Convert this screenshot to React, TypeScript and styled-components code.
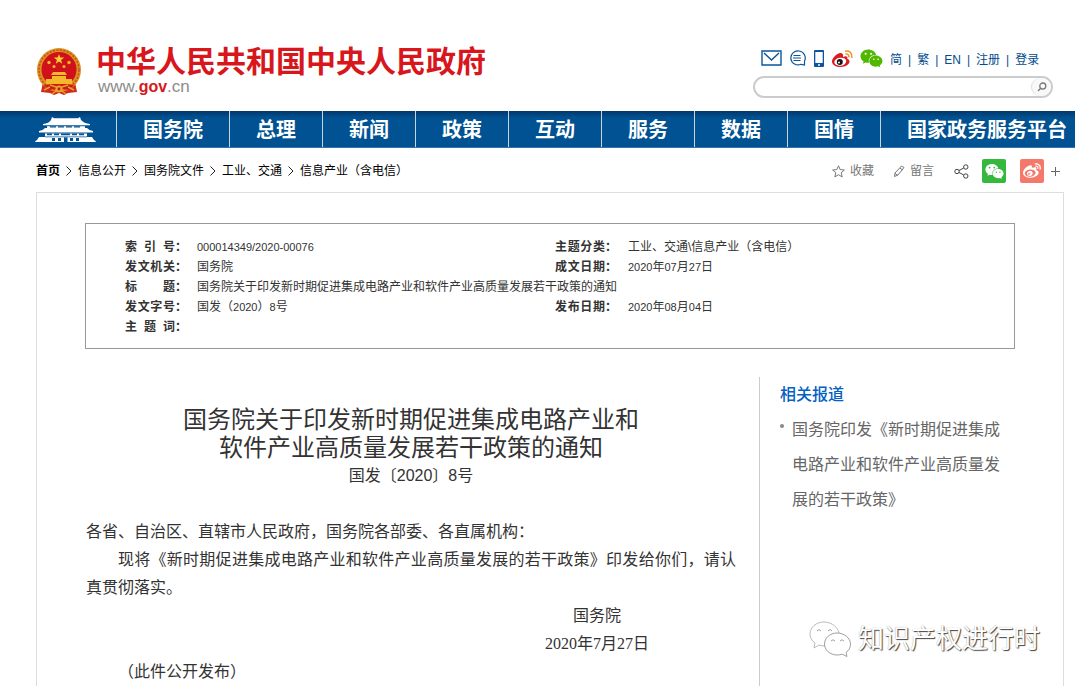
import React from "react";
import styled, { createGlobalStyle } from "styled-components";
import { FaWeibo, FaWeixin } from "react-icons/fa";

const GlobalStyle = createGlobalStyle`
  * { box-sizing: border-box; }
  html, body, #root { height: 100%; }
  body {
    margin: 0;
    overflow: hidden;
    background: #fff;
    color: #333;
    font-family: "Liberation Sans", "Noto Sans CJK SC", sans-serif;
    font-size: 12px;
  }
  a { color: inherit; text-decoration: none; }
  button { border: 0; background: none; padding: 0; font: inherit; color: inherit; cursor: pointer; }
  ul, ol, h1, h2, p, dl, dd { margin: 0; padding: 0; list-style: none; }
  svg { display: block; flex: none; }
`;

const Page = styled.div`
  position: relative;
  display: flex;
  flex-direction: column;
  height: 100%;
  overflow: hidden;
`;

const Header = styled.header`
  display: flex;
  flex: none;
  justify-content: space-between;
  align-items: flex-start;
  height: 111px;
  padding: 44px 22px 0 36px;
`;

const Brand = styled.a`
  display: flex;
  gap: 14px;
  padding-top: 2px;
`;

const BrandName = styled.span`
  display: block;
  color: #d7171b;
  font-size: 30px;
  font-weight: 700;
  line-height: 32px;
  white-space: nowrap;
`;

const BrandUrl = styled.span`
  display: block;
  padding-left: 2px;
  color: #8c8c8c;
  font-size: 17px;
  line-height: 18px;

  b {
    color: #d7171b;
    font-size: 16px;
  }
`;

const HeaderTools = styled.div`
  width: 300px;
`;

const QuickLinks = styled.div`
  display: flex;
  align-items: center;
  height: 28px;
  padding-left: 8px;
  color: #004b8d;
  line-height: 20px;
  white-space: nowrap;
`;

const QuickIcons = styled.div`
  display: flex;
  align-items: center;
  gap: 7px;
  margin-right: 7px;
`;

const LangList = styled.ul`
  display: flex;
  padding-top: 3px;

  li + li::before {
    content: "|";
    margin: 0 6px;
  }
`;

const SearchForm = styled.form`
  display: flex;
  align-items: center;
  height: 22px;
  margin-top: 4px;
  border: 2px solid #ccc;
  border-radius: 11px;
`;

const SearchInput = styled.input`
  flex: 1;
  min-width: 0;
  height: 18px;
  padding: 0 10px;
  border: 0;
  outline: 0;
  background: transparent;
`;

const SearchButton = styled.button`
  display: flex;
  align-items: center;
  justify-content: center;
  width: 20px;
  height: 18px;
  border-left: 1px solid #ddd;
  border-radius: 9px;
  background: #f8f8f8;
`;

const Nav = styled.nav`
  display: flex;
  flex: none;
  height: 37px;
  padding-left: 35px;
  overflow: hidden;
  border-bottom: 1px solid #3b73a9;
  background: linear-gradient(#00386a, #005293 7px, #005293);
`;

const NavItem = styled.a<{ $home?: boolean }>`
  flex: none;
  padding: ${(p) => (p.$home ? "6px 20px 0 0" : "0 26px")};
  border-right: 1px solid #c9d3dc;
  color: #fff;
  font-size: 20px;
  font-weight: 700;
  line-height: 38px;
  white-space: nowrap;

  &:last-child { border-right: 0; }
`;

const SubBar = styled.div`
  display: flex;
  flex: none;
  align-items: center;
  justify-content: space-between;
  height: 44px;
  padding: 2px 14px 0 36px;
`;

const Crumbs = styled.ol`
  display: flex;
  align-items: center;
  gap: 6px;
  color: #000;
  line-height: 20px;
  white-space: nowrap;

  li { display: flex; align-items: center; gap: 6px; }
  li:first-child { font-weight: 700; }
`;

const ShareBar = styled.div`
  display: flex;
  align-items: center;
  color: #777;
  line-height: 20px;
`;

const ShareButton = styled.button<{ $gap: number }>`
  display: flex;
  align-items: center;
  gap: 5px;
  margin-right: ${(p) => p.$gap}px;
  white-space: nowrap;
`;

const ShareTile = styled.button<{ $color: string; $gap: number }>`
  display: flex;
  align-items: center;
  justify-content: center;
  width: 24px;
  height: 24px;
  margin-right: ${(p) => p.$gap}px;
  border-radius: 2px;
  background: ${(p) => p.$color};
  color: #fff;
`;

const Sheet = styled.main`
  flex: 1;
  margin: 0 11px 0 36px;
  padding: 30px 48px 0;
  border: 1px solid #ddd;
  border-bottom: 0;
`;

const MetaBox = styled.section`
  padding: 13px 38px 11px 39px;
  border: 1px solid #999;
`;

const MetaTable = styled.table`
  width: 100%;
  border-collapse: collapse;
  table-layout: fixed;
  line-height: 20px;
  white-space: nowrap;

  th, td { padding: 0; text-align: left; }
`;

const MetaLabel = styled.span`
  display: inline-block;
  width: 50px;
  text-align: justify;
  text-align-last: justify;
  vertical-align: top;
`;

const Columns = styled.div`
  display: flex;
  height: 100%;
  padding-top: 28px;
`;

const Article = styled.article`
  flex: 1;
  padding: 29px 23px 0 1px;
  font-size: 16px;
  line-height: 28px;
`;

const ArticleTitle = styled.h1`
  font-size: 24px;
  font-weight: 400;
  line-height: 28px;
  text-align: center;
`;

const DocNumber = styled.p`
  margin-bottom: 28px;
  text-align: center;
`;

const Paragraph = styled.p<{ $indent?: boolean }>`
  text-align: justify;
  text-indent: ${(p) => (p.$indent ? "2em" : "0")};
`;

const Signature = styled.div`
  width: 104px;
  margin: 0 87px 0 auto;
  font-family: "Liberation Serif", "Noto Sans CJK SC", serif;
  text-align: center;
  white-space: nowrap;
`;

const Digits = styled.span`
  font-size: 11px;
`;

const Aside = styled.aside`
  width: 256px;
  padding-left: 20px;
  border-left: 1px solid #ccc;
`;

const AsideTitle = styled.h2`
  color: #0560c4;
  font-size: 16px;
  font-weight: 500;
  line-height: 35px;
`;

const AsideItem = styled.li`
  display: flex;
  gap: 8px;
  width: 222px;
  color: #666;
  font-size: 16px;
  line-height: 35px;

  &::before {
    content: "";
    flex: none;
    width: 4px;
    height: 4px;
    margin-top: 12px;
    border-radius: 2px;
    background: #888;
  }
`;

const Watermark = styled.div`
  position: absolute;
  right: 35px;
  bottom: 28px;
  display: flex;
  align-items: center;
  gap: 7px;
  color: #fff;
  font-size: 26px;
  line-height: 38px;
  text-shadow: 1px 1px 1px #444, 0 0 1px #999;
`;

const Emblem = () => (
  <svg width="46" height="50" viewBox="0 0 46 50" aria-label="国徽">
    <path d="M7 36L5 46l9 1 4 2 5-2 5 2 4-2 9-1-2-10z" fill="#cf2a1c" />
    <circle cx="23" cy="24" r="22" fill="#dd8f20" />
    <circle cx="23" cy="24" r="20" fill="none" stroke="#c2511c" strokeWidth="1.5" strokeDasharray="2 1.5" />
    <circle cx="23" cy="23.500" r="17.500" fill="#d0101a" />
    <path d="M23 8l1.300 3.600h3.900l-3.100 2.400 1.100 3.700-3.200-2.200-3.200 2.200 1.100-3.700-3.100-2.400h3.900z" fill="#fad02c" />
    <g fill="#f4b929">
      <circle cx="13" cy="16.500" r="1.700" /><circle cx="33" cy="16.500" r="1.700" />
      <circle cx="18" cy="20.500" r="1.500" /><circle cx="28" cy="20.500" r="1.500" />
      <path d="M17 26h12l2 3H15zM16 30h14v3H16zM10 33h26v5H10z" />
    </g>
    <path d="M8 39q15-2 30 0l-5 5q-10-3-20 0z" fill="#cf1a1c" />
    <path d="M14 39l9 3 9-3M8 44l6-3M38 44l-6-3M16 48l7-5 7 5" fill="none" stroke="#e9a127" strokeWidth="1.500" />
    <circle cx="23" cy="43" r="3.500" fill="#e9a127" /><circle cx="23" cy="43" r="1.400" fill="#c5161d" />
  </svg>
);

const Gate = () => (
  <svg width="61" height="26" viewBox="0 0 61 26" aria-label="首页">
    <g fill="#fff">
      <path d="M17 0l2 1.200h24L45 0l1 3q3 3.500 9 4v1.300H8V7q6-.5 8-4z" />
      <path d="M12 9.300h38V12H12z" />
      <path d="M10 11h42q2 2.500 6 3v1.400H4V14q4-.5 6-3z" />
      <path d="M10 16.400h42V25H10z" />
      <path d="M4 20h8v5H0q0-1 2-2zM49 20h8l2 3q2 1 2 2H49z" />
    </g>
    <g fill="#005293">
      <path d="M15 9.300h6v1.200h-6zM23 9.300h6v1.200h-6zM31 9.300h6v1.200h-6zM39 9.300h6v1.200h-6z" />
      <path d="M12 16.400h5v1.800h-5zM19 16.400h5v1.800h-5zM26 16.400h9v1.800h-9zM37 16.400h5v1.800h-5zM44 16.400h5v1.800h-5z" />
      <path d="M17 21h3v3h-3zM23 21h3v3h-3zM29 20.500h3.500V25H29zM35 21h3v3h-3zM41 21h3v3h-3zM10 19.500h42v.8H10z" />
    </g>
  </svg>
);

const MailIcon = () => (
  <svg width="21" height="16" viewBox="0 0 21 16" fill="none" stroke="#0a559b" strokeWidth="1.4">
    <path d="M1 1h19v14H1zM3 3l7.5 7L18 3" />
  </svg>
);

const ChatIcon = () => (
  <svg width="17" height="16" viewBox="1 0 17 16" fill="none" stroke="#0a559b" strokeWidth="1.200">
    <path d="M16.500 15v-4A7.200 7 0 1 0 13 14.300zM5.500 5.500h7M5 8h8M5.500 10.500h7" />
  </svg>
);

const PhoneIcon = () => (
  <svg width="12" height="17" viewBox="-1 0 12 17">
    <rect width="10" height="17" rx="1" fill="#0a559b" />
    <path d="M1.300 2h7.400v11H1.300z" fill="#fff" />
    <circle cx="5" cy="15" r="1" fill="#fff" />
  </svg>
);

const WeiboColor = () => (
  <svg width="21" height="17" viewBox="0 0 21 17">
    <path d="M8 3C4 4 0 8.500 0 11.500C0 15 4 17 8.500 17C14 17 17.500 14 17.500 11.500C17.500 10 16.500 9.200 15.300 8.900C16 6.500 14.500 5.500 11 7C11.500 4.500 10.500 2.800 8 3Z" fill="#dd1a1f" />
    <ellipse cx="8.300" cy="11.700" rx="6" ry="4" fill="#fff" transform="rotate(-8 8.300 11.700)" />
    <circle cx="7.800" cy="12" r="3" fill="#1b1212" />
    <circle cx="7" cy="12.500" r="1" fill="#fff" />
    <path d="M13 1.200Q20 0 20 8M13.500 4Q17 3.500 16.800 7.200" fill="none" stroke="#f09023" strokeWidth="1.500" />
  </svg>
);

const SearchIcon = () => (
  <svg width="10" height="10" viewBox="0 0 10 10" fill="none" stroke="#777" strokeWidth="1.300">
    <circle cx="5.800" cy="4" r="3" /><path d="M3.700 6.200L1 9" />
  </svg>
);

const Chevron = () => (
  <svg width="6" height="10" viewBox="0 0 6 10" fill="none" stroke="#222">
    <path d="M.5 .5L5 5L.5 9.500" />
  </svg>
);

const StarIcon = () => (
  <svg width="13" height="13" viewBox="0 0 13 13" fill="none" stroke="#777">
    <path d="M6.500 .8l1.700 3.800 4.200.4-3.200 2.700 1 4.200-3.700-2.200-3.700 2.200 1-4.200L.6 5l4.200-.4z" />
  </svg>
);

const PencilIcon = () => (
  <svg width="12" height="12" viewBox="0 0 12 12" fill="none" stroke="#777">
    <path d="M8.500 1L11 2.500L5 10L1.500 11.500L2 8zM7 3l2.500 2M2 8.500l2.500 1.500" />
  </svg>
);

const ShareIcon = () => (
  <svg width="15" height="15" viewBox="0 0 15 15" fill="none" stroke="#444">
    <circle cx="3" cy="7.500" r="2.200" /><circle cx="11.800" cy="3" r="2.200" /><circle cx="11.800" cy="12" r="2.200" />
    <path d="M5 6.500L9.800 4M5 8.500L9.800 11" />
  </svg>
);

const PlusIcon = () => (
  <svg width="11" height="11" viewBox="0 0 11 11" stroke="#666"><path d="M5.500 1v9M1 5.500h9" /></svg>
);

const BubblesIcon = () => (
  <svg width="42" height="36" viewBox="0 0 42 36" fill="#fff" stroke="#888" strokeWidth=".8">
    <path d="M15 1C7 1 1 6.500 1 13c0 4 2 7 5 9l-1 5 5-3c2 .7 4 1 6 1C24 25 30 19 30 13S23 1 15 1z" stroke="#aaa" />
    <path d="M28 12c-7 0-12.500 5-12.500 11S21 34 28 34c2 0 3.500-.3 5-.9l5 2.400-1-4c3-2 4.500-5 4.500-8.500C41.500 17 35 12 28 12z" />
    <path d="M8 10q2-3 4 0M19 10q2-3 4 0M22 20q2-2.500 4 0M31 20q2-2.500 4 0" fill="none" />
  </svg>
);

const navItems = ["国务院", "总理", "新闻", "政策", "互动", "服务", "数据", "国情", "国家政务服务平台"];
const crumbs = ["首页", "信息公开", "国务院文件", "工业、交通", "信息产业（含电信）"];
const languages = ["简", "繁", "EN", "注册", "登录"];

const Label = ({ children }: { children: string }) => (
  <th scope="row"><MetaLabel>{children}</MetaLabel>：</th>
);

/* Sets runs of figures a step smaller than the characters around them. */
const Mixed = ({ text }: { text: string }) => (
  <>
    {text.split(/([0-9][0-9/-]*)/).map((part, i) =>
      i % 2 ? <Digits key={i}>{part}</Digits> : part
    )}
  </>
);

export default function App() {
  return (
    <Page lang="zh-CN">
      <GlobalStyle />
      <Header>
        <Brand href="#">
          <Emblem />
          <span>
            <BrandName>中华人民共和国中央人民政府</BrandName>
            <BrandUrl>www.<b>gov</b>.cn</BrandUrl>
          </span>
        </Brand>
        <HeaderTools>
          <QuickLinks>
            <QuickIcons>
              <a href="#" aria-label="邮箱"><MailIcon /></a>
              <a href="#" aria-label="问答"><ChatIcon /></a>
              <a href="#" aria-label="客户端"><PhoneIcon /></a>
              <a href="#" aria-label="微博"><WeiboColor /></a>
              <a href="#" aria-label="微信"><FaWeixin size={23} color="#51b800" /></a>
            </QuickIcons>
            <LangList>
              {languages.map((name) => <li key={name}><a href="#">{name}</a></li>)}
            </LangList>
          </QuickLinks>
          <SearchForm>
            <SearchInput type="text" aria-label="搜索" />
            <SearchButton type="button" aria-label="搜索"><SearchIcon /></SearchButton>
          </SearchForm>
        </HeaderTools>
      </Header>

      <Nav>
        <NavItem href="#" $home><Gate /></NavItem>
        {navItems.map((name) => <NavItem href="#" key={name}>{name}</NavItem>)}
      </Nav>

      <SubBar>
        <Crumbs>
          {crumbs.map((name, i) => (
            <li key={name}>{i > 0 && <Chevron />}<a href="#">{name}</a></li>
          ))}
        </Crumbs>
        <ShareBar>
          <ShareButton $gap={19}><StarIcon />收藏</ShareButton>
          <ShareButton $gap={20}><PencilIcon />留言</ShareButton>
          <ShareButton $gap={13} aria-label="分享"><ShareIcon /></ShareButton>
          <ShareTile $color="#36b83c" $gap={14} aria-label="微信"><FaWeixin size={19} /></ShareTile>
          <ShareTile $color="#f5796a" $gap={6} aria-label="微博"><FaWeibo size={18} /></ShareTile>
          <ShareButton $gap={0} aria-label="更多"><PlusIcon /></ShareButton>
        </ShareBar>
      </SubBar>

      <Sheet>
        <MetaBox>
          <MetaTable>
            <colgroup>
              <col width="72" /><col width="358" /><col width="73" /><col />
            </colgroup>
            <tbody>
              <tr>
                <Label>索引号</Label><td><Mixed text="000014349/2020-00076" /></td>
                <Label>主题分类</Label><td>工业、交通\信息产业（含电信）</td>
              </tr>
              <tr>
                <Label>发文机关</Label><td>国务院</td>
                <Label>成文日期</Label><td><Mixed text="2020年07月27日" /></td>
              </tr>
              <tr>
                <Label>标题</Label>
                <td colSpan={3}>国务院关于印发新时期促进集成电路产业和软件产业高质量发展若干政策的通知</td>
              </tr>
              <tr>
                <Label>发文字号</Label><td><Mixed text="国发（2020）8号" /></td>
                <Label>发布日期</Label><td><Mixed text="2020年08月04日" /></td>
              </tr>
              <tr><Label>主题词</Label><td colSpan={3} /></tr>
            </tbody>
          </MetaTable>
        </MetaBox>

        <Columns>
          <Article>
            <ArticleTitle>国务院关于印发新时期促进集成电路产业和<br />软件产业高质量发展若干政策的通知</ArticleTitle>
            <DocNumber>国发〔2020〕8号</DocNumber>
            <Paragraph>各省、自治区、直辖市人民政府，国务院各部委、各直属机构：</Paragraph>
            <Paragraph $indent>现将《新时期促进集成电路产业和软件产业高质量发展的若干政策》印发给你们，请认真贯彻落实。</Paragraph>
            <Signature>
              <p>国务院</p>
              <p>2020年7月27日</p>
            </Signature>
            <Paragraph $indent>（此件公开发布）</Paragraph>
          </Article>
          <Aside>
            <AsideTitle>相关报道</AsideTitle>
            <ul>
              <AsideItem><a href="#">国务院印发《新时期促进集成电路产业和软件产业高质量发展的若干政策》</a></AsideItem>
            </ul>
          </Aside>
        </Columns>
      </Sheet>

      <Watermark><BubblesIcon />知识产权进行时</Watermark>
    </Page>
  );
}
